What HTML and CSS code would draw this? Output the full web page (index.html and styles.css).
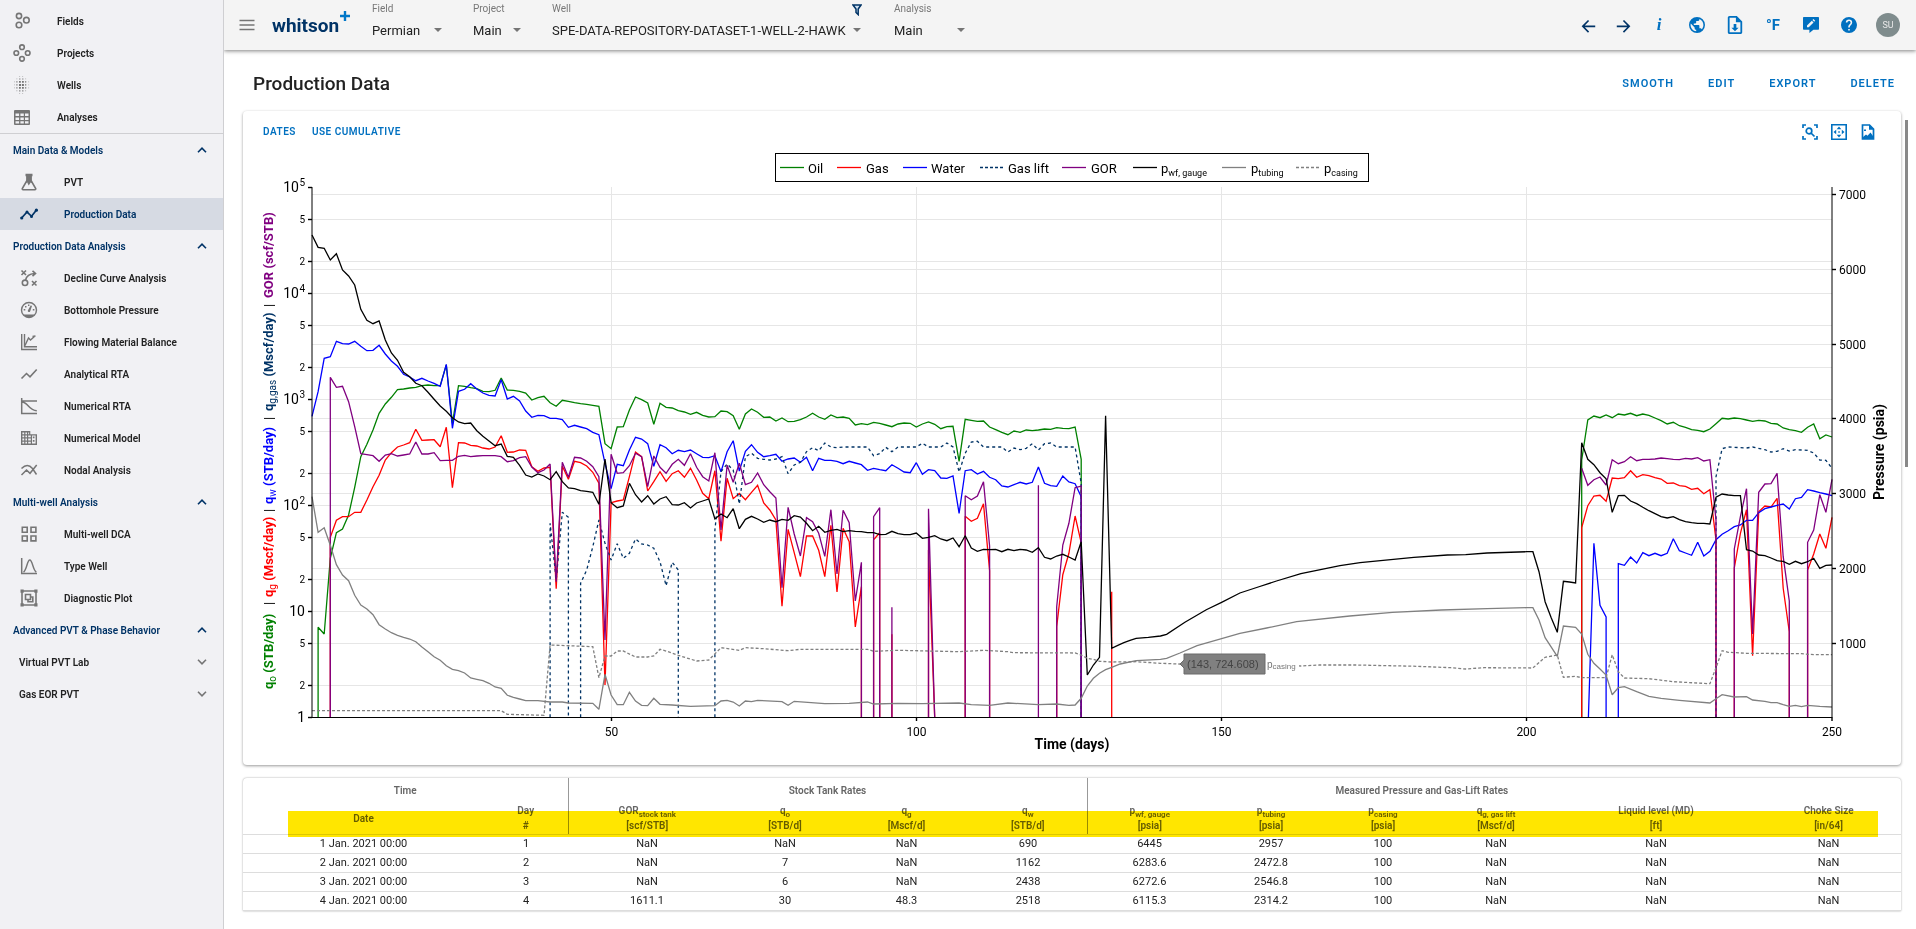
FILE: index.html
```html
<!DOCTYPE html>
<html lang="en">
<head>
<meta charset="utf-8">
<title>Production Data</title>
<link rel="stylesheet" href="styles.css">
</head>
<body>
<div class="app">
  <nav class="sidebar">
    <div class="nav-top">
      <a href="#" class="nav-item"><svg class="ico" viewBox="0 0 18 18"><g fill="none" stroke="currentColor" stroke-width="1.6"><circle cx="6" cy="4" r="2.6"/><circle cx="13.4" cy="8.2" r="2.8"/><circle cx="6" cy="13" r="2.8"/></g></svg><span>Fields</span></a>
      <a href="#" class="nav-item"><svg class="ico" viewBox="0 0 18 18"><g fill="none" stroke="currentColor" stroke-width="1.6"><circle cx="9" cy="3.2" r="2.3"/><circle cx="3.3" cy="9" r="2.3"/><circle cx="14.7" cy="9" r="2.3"/><circle cx="9" cy="14.8" r="2.3"/></g></svg><span>Projects</span></a>
      <a href="#" class="nav-item"><svg class="ico" viewBox="0 0 18 18" fill="currentColor"><path d="M6 7.9h2v2H6zM8.9 7.9h2v2h-2zM6 5h1.8v1.8H6zM9 5h1.8v1.8H9zM6 11h1.8v1.8H6zM9 11h1.8v1.8H9zM12 5.2h1.3v1.3H12zM12 8.2h1.3v1.3H12zM12 11.2h1.3v1.3H12zM3.3 5.2h1.2v1.3H3.3zM3.3 8.2h1.2v1.3H3.3zM3.3 11.2h1.2v1.3H3.3zM6.2 2.4h1.2v1.2H6.2zM9.2 2.4h1.2v1.2H9.2zM6.2 14.2h1.2v1.2H6.2zM9.2 14.2h1.2v1.2H9.2z"/><path opacity=".6" d="M3.4 2.4h.9v.9h-.9zM12.2 2.4h.9v.9h-.9zM15.2 5.4h.9v.9h-.9zM15.2 8.4h.9v.9h-.9zM15.2 11.4h.9v.9h-.9zM1 5.4h.9v.9H1zM1 8.4h.9v.9H1zM1 11.4h.9v.9H1zM3.4 14.3h.9v.9h-.9zM12.2 14.3h.9v.9h-.9zM6.2.3h.9v.7h-.9zM9.2.3h.9v.7h-.9zM6.2 17h.9v.7h-.9zM9.2 17h.9v.7h-.9z"/></svg><span>Wells</span></a>
      <a href="#" class="nav-item"><svg class="ico" viewBox="0 0 18 18"><path fill="currentColor" fill-rule="evenodd" d="M2 2h14q1 0 1 1v13q0 1-1 1H2q-1 0-1-1V3q0-1 1-1zM2.5 5.5v2.6h3.6V5.500zM7.400 5.500v2.600h3.400V5.500zM12 5.500v2.600h3.500V5.500zM2.500 9.400v2.500h3.600V9.400zM7.400 9.400v2.500h3.400V9.400zM12 9.400v2.500h3.500V9.400zM2.500 13.200v2.400h3.600v-2.400zM7.400 13.200v2.400h3.400v-2.400zM12 13.200v2.400h3.500v-2.400z"/></svg><span>Analyses</span></a>
    </div>
    <button type="button" class="nav-head"><span>Main Data &amp; Models</span><svg class="chev" viewBox="0 0 10 6"><path d="M1 5.200 5 1.200l4 4"/></svg></button>
    <a href="#" class="nav-item sub"><svg class="ico" viewBox="0 0 18 18"><path fill="none" stroke="currentColor" stroke-width="1.600" d="M7 2v5.500L2.300 15.500q-.3 1.200.8 1.200h11.800q1.100 0 .8-1.200L11 7.500V2"/><path fill="currentColor" d="M5.500.8h7v2.400h-7zM6.500 3h5v5l1.800 2.600-2.600-1-2 2.800-1.600-3.200-2 1L6.500 8z"/></svg><span>PVT</span></a>
    <a href="#" class="nav-item sub active"><svg class="ico" viewBox="0 0 18 18"><path fill="none" stroke="currentColor" stroke-width="1.700" d="M1.600 13 7 7l4.500 4.300L16.500 5"/><g fill="currentColor"><circle cx="1.700" cy="13" r="1.600"/><circle cx="7" cy="7" r="1.500"/><circle cx="11.500" cy="11.400" r="1.500"/><circle cx="16.400" cy="5.200" r="1.600"/></g></svg><span>Production Data</span></a>
    <button type="button" class="nav-head"><span>Production Data Analysis</span><svg class="chev" viewBox="0 0 10 6"><path d="M1 5.200 5 1.200l4 4"/></svg></button>
    <a href="#" class="nav-item sub"><svg class="ico" viewBox="0 0 18 18"><g fill="none" stroke="currentColor" stroke-width="1.600"><path d="M1.500 1.500 6 6M6 1.500 1.500 6M12 12l4.500 4.500M16.500 12 12 16.500"/><circle cx="5" cy="13.800" r="2.700"/><path d="M5.500 11C6.500 7 10 4.800 14.500 4.500M12.500 1.800l3 2.700-3 2.700"/></g></svg><span>Decline Curve Analysis</span></a>
    <a href="#" class="nav-item sub"><svg class="ico" viewBox="0 0 18 18"><circle cx="9" cy="9" r="7.500" fill="none" stroke="currentColor" stroke-width="1.400"/><path fill="currentColor" d="M3.800 13.500h10.400q-1.800 3.300-5.200 3.300t-5.200-3.300zM10.800 4.200 12 5l-1.800 5.200q-.4 1-1.500.9-1.200-.4-.9-1.500zM3.700 8h1.600v1.400H3.700zM5 5h1.500v1.400H5zM8 3.600h1.400V5H8zM12.800 8h1.600v1.400h-1.600z"/></svg><span>Bottomhole Pressure</span></a>
    <a href="#" class="nav-item sub"><svg class="ico" viewBox="0 0 18 18"><g fill="none" stroke="currentColor" stroke-width="1.400"><path d="M1.700 1v15.500H17M4.500 1v12.700H17"/><path d="M5 12.500 8.500 5l2 2 4.500-4M12.500 3.500 15.500 3"/></g></svg><span>Flowing Material Balance</span></a>
    <a href="#" class="nav-item sub"><svg class="ico" viewBox="0 0 18 18"><path fill="none" stroke="currentColor" stroke-width="1.600" d="m1.500 13.500 5-5 3.500 3.300L16.700 4.500"/></svg><span>Analytical RTA</span></a>
    <a href="#" class="nav-item sub"><svg class="ico" viewBox="0 0 18 18"><path fill="none" stroke="currentColor" stroke-width="1.500" d="M1.700 1v15.500H17M1.700 4H17M2 5c6 0 6.500 8.500 14.800 8.800"/></svg><span>Numerical RTA</span></a>
    <a href="#" class="nav-item sub"><svg class="ico" viewBox="0 0 18 18"><path fill="currentColor" fill-rule="evenodd" d="M1 2h9.300v3.200H17V16H1zM2.400 3.400v1.800h1.800V3.400zM5.400 3.400v1.800h1.600V3.400zM2.400 6.500v1.800h1.800V6.500zM5.400 6.500v1.800h1.600V6.500zM2.400 9.600v1.800h1.800V9.600zM5.400 9.600v1.800h1.600V9.600zM2.400 12.700v1.900h1.800v-1.900zM5.400 12.700v1.900h1.600v-1.900zM8.200 3.400v1.800h.9V3.400zM8.200 6.500v1.800h2.600V6.500zM8.200 9.600v1.800h2.600V9.600zM8.200 12.700v1.900h2.600v-1.900zM12 6.500v8.100h3.600V6.500zM12.800 7.600h1.700v1.700h-1.700zM12.800 11h1.700v1.700h-1.700z"/></svg><span>Numerical Model</span></a>
    <a href="#" class="nav-item sub"><svg class="ico" viewBox="0 0 18 18"><path fill="none" stroke="currentColor" stroke-width="1.500" d="m1.500 14 5-5 3.500 3.300L16.700 4M1.500 7.500q6-6 11 0l4 6"/></svg><span>Nodal Analysis</span></a>
    <button type="button" class="nav-head"><span>Multi-well Analysis</span><svg class="chev" viewBox="0 0 10 6"><path d="M1 5.200 5 1.200l4 4"/></svg></button>
    <a href="#" class="nav-item sub"><svg class="ico" viewBox="0 0 18 18"><path fill="none" stroke="currentColor" stroke-width="1.600" d="M2.300 2.300h4.900v4.900H2.300zM11 2.300h4.900v4.900H11zM2.300 11h4.900v4.900H2.300zM11 11h4.900v4.900H11z"/></svg><span>Multi-well DCA</span></a>
    <a href="#" class="nav-item sub"><svg class="ico" viewBox="0 0 18 18"><path fill="none" stroke="currentColor" stroke-width="1.500" d="M1.700 1v15.500H17M3.500 15C7 13 7 3 9.800 3s2.900 10 6.500 12"/></svg><span>Type Well</span></a>
    <a href="#" class="nav-item sub"><svg class="ico" viewBox="0 0 18 18"><g fill="none" stroke="currentColor" stroke-width="1.600"><path d="M2 2h14v14H2zM5.500 5.500h5v5h-5z"/><path d="M10.500 8h2.300v4.800H8v-2.300"/></g><path fill="currentColor" d="M.5.500h3.200v3.200H.5zM14.300.500h3.200v3.200h-3.200zM.5 14.300h3.200v3.200H.5zM14.300 14.300h3.200v3.200h-3.200z"/></svg><span>Diagnostic Plot</span></a>
    <button type="button" class="nav-head"><span>Advanced PVT &amp; Phase Behavior</span><svg class="chev" viewBox="0 0 10 6"><path d="M1 5.200 5 1.200l4 4"/></svg></button>
    <button type="button" class="nav-head plain"><span>Virtual PVT Lab</span><svg class="chev" viewBox="0 0 10 6"><path d="m1 .8 4 4 4-4"/></svg></button>
    <button type="button" class="nav-head plain"><span>Gas EOR PVT</span><svg class="chev" viewBox="0 0 10 6"><path d="m1 .8 4 4 4-4"/></svg></button>
  </nav>

  <div class="content">
    <header class="topbar">
      <button type="button" class="menu-btn" aria-label="Menu"><svg viewBox="0 0 16 12"><path d="M.5 1.500h15M.5 6h15M.5 10.500h15" stroke="currentColor" stroke-width="1.300"/></svg></button>
      <a href="#" class="logo">whitson<svg viewBox="0 0 10 10"><path d="M5 0v10M0 5h10" stroke="#0077c8" stroke-width="2.400"/></svg></a>
      <div class="picker field"><label for="field">Field</label><div class="select"><select id="field"><option>Permian</option></select></div></div>
      <div class="picker project"><label for="project">Project</label><div class="select"><select id="project"><option>Main</option></select></div></div>
      <div class="picker well"><label for="well">Well</label><svg class="filter" viewBox="0 0 10 12"><path d="M1 1h8L6.200 5v5.600L4 8.500V5z" fill="#cfe0f0" stroke="#003366" stroke-width="1.500"/></svg><div class="select"><select id="well"><option>SPE-DATA-REPOSITORY-DATASET-1-WELL-2-HAWK</option></select></div></div>
      <div class="picker analysis"><label for="analysis">Analysis</label><div class="select"><select id="analysis"><option>Main</option></select></div></div>
      <div class="actions">
        <button type="button" class="arrow" aria-label="Back"><svg viewBox="0 0 18 18"><path fill="none" stroke="currentColor" stroke-width="1.800" d="M16 10.500H2.500M8.500 4l-6.500 6.500 6.500 6.500"/></svg></button>
        <button type="button" class="arrow" aria-label="Forward"><svg viewBox="0 0 18 18"><path fill="none" stroke="currentColor" stroke-width="1.800" d="M2 10.500h13.500M9.500 4l6.500 6.500-6.500 6.500"/></svg></button>
        <button type="button" class="info">i</button>
        <button type="button" aria-label="Globe"><svg viewBox="2 2 20 20"><path fill="currentColor" d="M17.900 17.390C17.640 16.590 16.890 16 16 16H15V13A1 1 0 0 0 14 12H8V10H10A1 1 0 0 0 11 9V7H13A2 2 0 0 0 15 5V4.590C17.930 5.770 20 8.640 20 12C20 14.080 19.200 15.970 17.900 17.390M11 19.930C7.050 19.440 4 16.080 4 12C4 11.380 4.080 10.780 4.210 10.210L9 15V16A2 2 0 0 0 11 18M12 2A10 10 0 0 0 2 12A10 10 0 0 0 12 22A10 10 0 0 0 22 12A10 10 0 0 0 12 2Z"/></svg></button>
        <button type="button" aria-label="Download"><svg class="tall" viewBox="4 2 16 20"><path fill="currentColor" d="M14 2H6C4.890 2 4 2.900 4 4V20C4 21.100 4.890 22 6 22H18C19.100 22 20 21.100 20 20V8L14 2M18 20H6V4H13V9H18V20M12 19L8 15H10.500V11H13.500V15H16L12 19Z"/></svg></button>
        <button type="button" class="unit">°F</button>
        <button type="button" aria-label="Feedback"><svg viewBox="2 2 20 20"><path fill="currentColor" fill-rule="evenodd" d="M3 2h18q1 0 1 1v14q0 1-1 1h-6l-5 4v-4H3q-1 0-1-1V3q0-1 1-1zM7 14.800h2.200l6-6-2.200-2.200-6 6zM13.800 5.800l2.200 2.200 1.300-1.300-2.200-2.200z"/></svg></button>
        <button type="button" aria-label="Help"><svg viewBox="2 2 20 20"><path fill="currentColor" d="M15.070 11.250L14.170 12.170C13.450 12.890 13 13.500 13 15H11V14.500C11 13.390 11.450 12.390 12.170 11.670L13.410 10.410C13.780 10.050 14 9.550 14 9C14 7.890 13.100 7 12 7A2 2 0 0 0 10 9H8A4 4 0 0 1 12 5A4 4 0 0 1 16 9C16 9.880 15.640 10.670 15.070 11.250M13 19H11V17H13M12 2A10 10 0 0 0 2 12A10 10 0 0 0 12 22A10 10 0 0 0 22 12C22 6.470 17.500 2 12 2Z"/></svg></button>
        <button type="button" class="avatar">SU</button>
      </div>
    </header>

    <main>
      <div class="page-head">
        <h1>Production Data</h1>
        <div class="page-actions"><button type="button">Smooth</button><button type="button">Edit</button><button type="button">Export</button><button type="button">Delete</button></div>
      </div>

      <section class="card chart-card">
        <div class="chart-tools">
          <button type="button">Dates</button><button type="button">Use cumulative</button>
          <span class="chart-icons">
            <button type="button" aria-label="Zoom"><svg viewBox="0 0 16 16" fill="none" stroke="currentColor" stroke-width="1.700"><path d="M1 4V1h3M12 1h3v3M15 12v3h-3M4 15H1v-3M9 9l3.500 3.500"/><circle cx="7" cy="7" r="2.800"/></svg></button>
            <button type="button" aria-label="Fit"><svg viewBox="0 0 16 16"><path fill="none" stroke="currentColor" stroke-width="1.600" d="M.8.800h14.400v14.400H.8z"/><path fill="currentColor" d="M8 2.500l2.300 2.700H5.700zM8 13.500l2.300-2.700H5.700zM2.500 8l2.700-2.300v4.600zM13.500 8l-2.700-2.300v4.600zM7.300 7.300h1.500v1.500H7.300z"/></svg></button>
            <button type="button" aria-label="Save image"><svg viewBox="0 0 16 16"><path fill="none" stroke="currentColor" stroke-width="1.700" d="M2.500 1h7l4 4v10h-11z"/><path fill="currentColor" d="M9 1v4.800h5L9 .5zM3 13l3-2.500 1.500 1.300L10.500 8.500 13 12v3H3zM4 5.500h2V7H4z"/></svg></button>
          </span>
        </div>
        <svg class="chart" viewBox="243 149 1658 616" role="img" aria-label="Production rates and pressures over time">
          <g id="grid" class="grid"></g>
          <g id="series" class="series"></g>
          <path class="axis" d="M312 187V717.500M1832 187V717.500M312 717.500H1832"/>
          <g id="ticks" class="ticks"></g>
          <g class="axis-title rates" transform="translate(273 689) rotate(-90)">
            <text x="0" fill="green">q<tspan class="s" dy="3">o</tspan><tspan dy="-3"> (STB/day)</tspan></text>
            <text x="84" class="bar">|</text>
            <text x="92" fill="red">q<tspan class="s" dy="3">g</tspan><tspan dy="-3"> (Mscf/day)</tspan></text>
            <text x="177" class="bar">|</text>
            <text x="185" fill="blue">q<tspan class="s" dy="3">w</tspan><tspan dy="-3"> (STB/day)</tspan></text>
            <text x="269" class="bar">|</text>
            <text x="278" fill="#003366">q<tspan class="s" dy="3">g,gas</tspan><tspan dy="-3"> (Mscf/day)</tspan></text>
            <text x="382" class="bar">|</text>
            <text x="391" fill="purple">GOR (scf/STB)</text>
          </g>
          <text class="axis-title mid" x="1072" y="749">Time (days)</text>
          <text class="axis-title mid" transform="rotate(-90 1884 452)" x="1884" y="452">Pressure (psia)</text>
          <g class="legend">
            <rect x="775.500" y="153.500" width="593" height="28"/>
            <path stroke="green" d="M780 167.500h24"/><text x="808" y="173">Oil</text>
            <path stroke="red" d="M837 167.500h24"/><text x="866" y="173">Gas</text>
            <path stroke="blue" d="M903 167.500h24"/><text x="931" y="173">Water</text>
            <path stroke="#003366" stroke-dasharray="3 2" d="M980 167.500h24"/><text x="1008" y="173">Gas lift</text>
            <path stroke="purple" d="M1062 167.500h24"/><text x="1091" y="173">GOR</text>
            <path stroke="black" d="M1133 167.500h24"/><text x="1161" y="173">p<tspan class="s" dy="3">wf, gauge</tspan></text>
            <path stroke="gray" d="M1222 167.500h24"/><text x="1251" y="173">p<tspan class="s" dy="3">tubing</tspan></text>
            <path stroke="gray" stroke-dasharray="3 2" d="M1296 167.500h24"/><text x="1324" y="173">p<tspan class="s" dy="3">casing</tspan></text>
          </g>
          <g class="tip">
            <rect class="tip-name" x="1265" y="655" width="34" height="18"/>
            <path d="M1180 664l4-4v-6h81v20h-81v-6z"/>
            <text x="1187" y="668">(143, 724.608)</text>
            <text class="name" x="1267" y="668">p<tspan class="s" dy="1">casing</tspan></text>
          </g>
        </svg>
      </section>

      <section class="card table-card">
        <table>
          <colgroup><col class="c-date"><col class="c-day"><col class="c-gor"><col class="c-118"><col class="c-125"><col class="c-118"><col class="c-125"><col class="c-118"><col class="c-106"><col class="c-120"><col class="c-liq"><col class="c-choke"></colgroup>
          <thead>
            <tr class="groups"><th colspan="2" class="edge">Time</th><th colspan="4" class="edge">Stock Tank Rates</th><th colspan="5">Measured Pressure and Gas-Lift Rates</th><th></th></tr>
            <tr class="cols"><th class="date">Date</th><th class="edge">Day<br>#</th><th>GOR<sub>stock tank</sub><br>[scf/STB]</th><th>q<sub>o</sub><br>[STB/d]</th><th>q<sub>g</sub><br>[Mscf/d]</th><th class="edge">q<sub>w</sub><br>[STB/d]</th><th>p<sub>wf, gauge</sub><br>[psia]</th><th>p<sub>tubing</sub><br>[psia]</th><th>p<sub>casing</sub><br>[psia]</th><th>q<sub>g, gas lift</sub><br>[Mscf/d]</th><th>Liquid level (MD)<br>[ft]</th><th>Choke Size<br>[in/64]</th></tr>
          </thead>
          <tbody>
            <tr><td>1 Jan. 2021 00:00</td><td>1</td><td>NaN</td><td>NaN</td><td>NaN</td><td>690</td><td>6445</td><td>2957</td><td>100</td><td>NaN</td><td>NaN</td><td>NaN</td></tr>
            <tr><td>2 Jan. 2021 00:00</td><td>2</td><td>NaN</td><td>7</td><td>NaN</td><td>1162</td><td>6283.6</td><td>2472.8</td><td>100</td><td>NaN</td><td>NaN</td><td>NaN</td></tr>
            <tr><td>3 Jan. 2021 00:00</td><td>3</td><td>NaN</td><td>6</td><td>NaN</td><td>2438</td><td>6272.6</td><td>2546.8</td><td>100</td><td>NaN</td><td>NaN</td><td>NaN</td></tr>
            <tr><td>4 Jan. 2021 00:00</td><td>4</td><td>1611.1</td><td>30</td><td>48.3</td><td>2518</td><td>6115.3</td><td>2314.2</td><td>100</td><td>NaN</td><td>NaN</td><td>NaN</td></tr>
          </tbody>
        </table>
        <div class="marker"></div>
      </section>
    </main>
    <div class="scroll-thumb"></div>
  </div>
</div>
<script src="chart.js"></script>
</body>
</html>
```
FILE: styles.css
```css
* { box-sizing: border-box; }
body { margin: 0; font-family: Roboto, "Liberation Sans", sans-serif; color: #222; background: #fff; }
button { font: inherit; color: inherit; background: none; border: 0; padding: 0; cursor: pointer; }
a { color: inherit; text-decoration: none; }
.app { display: flex; min-height: 100vh; }

.sidebar { flex: 0 0 224px; position: relative; z-index: 1; background: #f1f1f4; border-right: 1px solid #cfcfd2; padding-top: 5px; font-size: 10px; font-weight: 600; }
.nav-top { border-bottom: 1px solid #cfcfd2; height: 129px; }
.nav-item { display: flex; align-items: center; height: 32px; padding-left: 13px; }
.nav-item .ico { width: 18px; height: 18px; color: #757575; margin-right: 26px; }
.nav-item.sub { padding-left: 20px; }
.nav-item.active { background: #d6dae3; color: #003366; }
.nav-item.active .ico { color: #003366; }
.nav-head { display: flex; align-items: center; justify-content: space-between; width: 100%; height: 32px; padding: 0 16px 0 13px; color: #003366; text-align: left; }
.nav-head.plain { padding-left: 19px; color: #222; }
.chev { width: 10px; height: 6px; fill: none; stroke: #003366; stroke-width: 1.600; }
.plain .chev { stroke: #757575; }

.content { flex: 1; min-width: 0; position: relative; }
.topbar { display: flex; height: 50px; padding: 0 16px 0 15px; background: #f4f4f4; box-shadow: 0 1px 4px rgba(0,0,0,.5); position: relative; }
.menu-btn { width: 16px; align-self: center; color: #757575; }
.menu-btn svg { display: block; width: 16px; height: 12px; }
.logo { display: flex; align-items: center; margin-left: 17px; width: 100px; color: #003366; font-size: 19px; font-weight: 700; }
.logo svg { width: 10px; height: 10px; margin: 0 0 18px 1px; }
.picker { padding-top: 2px; position: relative; }
.picker label { display: block; font-size: 10px; line-height: 13px; color: #777; }
.select { position: relative; margin-top: 7px; }
.select::after { content: ""; position: absolute; right: 0; top: 6px; border: 4px solid transparent; border-top-color: #757575; pointer-events: none; }
select { appearance: none; display: block; width: 100%; height: 17px; padding: 0; border: 0; background: none; font: 13px/17px Roboto, "Liberation Sans", sans-serif; color: #222; }
.field { width: 70px; margin-right: 31px; }
.project { width: 48px; margin-right: 31px; }
.well { width: 309px; margin-right: 33px; }
.analysis { width: 71px; }
.filter { position: absolute; right: -1px; top: 4px; width: 10px; height: 12px; }
.actions { display: flex; align-items: center; margin-left: auto; color: #0070c0; }
.actions button { display: flex; justify-content: center; align-items: center; width: 38px; height: 24px; }
.actions svg { width: 16px; height: 16px; }
.actions svg.tall { height: 18px; }
.actions .arrow { width: 34px; color: #003366; }
.actions .info { font: italic bold 17px "Liberation Serif", serif; }
.actions .unit { font-size: 15px; font-weight: 700; }
.actions .avatar { width: 24px; margin-left: 8px; border-radius: 50%; background: #7f8c8d; color: #e8e8e8; font-size: 9px; }

main { padding: 0 15px 0 19px; }
.page-head { display: flex; align-items: center; justify-content: space-between; height: 61px; padding: 6px 6px 0 10px; }
h1 { margin: 0; font-size: 19px; font-weight: 500; }
.page-actions { display: flex; gap: 34px; }
.page-actions button, .chart-tools > button { color: #0070c0; font-size: 11px; font-weight: 600; letter-spacing: 1px; text-transform: uppercase; }
.card { position: relative; background: #fff; border-radius: 4px; box-shadow: 0 1px 3px rgba(0,0,0,.4); }
.chart-tools { display: flex; align-items: center; gap: 16px; height: 38px; padding: 3px 25px 0 20px; }
.chart-tools > button { font-size: 10px; letter-spacing: .05em; }
.chart-icons { display: flex; gap: 13px; margin-left: auto; color: #0070c0; }
.chart-icons svg { display: block; width: 16px; height: 16px; }
.chart { display: block; width: 100%; height: auto; }

.grid { stroke: #e6e6e6; stroke-width: 1; }
.series { fill: none; stroke-width: 1.300; stroke-linejoin: miter; stroke-miterlimit: 2; }
.axis { fill: none; stroke: #000; stroke-width: 1; }
.ticks { font-size: 12px; stroke-width: 1.400; }
.ticks text { fill: #000; }
.ticks .major { font-size: 14px; text-anchor: end; }
.ticks .minor, .ticks .sup { font-size: 10px; text-anchor: end; }
.ticks .mid { text-anchor: middle; }
.axis-title { font-size: 14px; font-weight: 700; }
.axis-title.rates { font-size: 13px; }
.axis-title.mid { text-anchor: middle; }
.axis-title .s { font-size: 10px; font-weight: 400; }
.axis-title .bar { font-weight: 400; }
.legend { font-size: 13px; }
.legend rect { fill: #fff; stroke: #000; }
.legend path { stroke-width: 1.300; }
.legend .s { font-size: 9px; }
.tip path { fill: #808080; stroke: #6a6a6a; }
.tip text { font: 11px "Liberation Sans", sans-serif; fill: #444; }
.tip .tip-name { fill: #fff; }
.tip .name { font-size: 10px; fill: #777; }
.tip .s { font-size: 8px; }

.table-card { margin-top: 13px; height: 133px; overflow: hidden; border-radius: 4px 4px 0 0; box-shadow: 0 0 2px rgba(0,0,0,.4); }
table { width: 100%; table-layout: fixed; border-collapse: collapse; text-align: center; }
.c-date { width: 241px; } .c-day { width: 84px; } .c-gor { width: 158px; } .c-118 { width: 118px; } .c-125 { width: 125px; }
.c-106 { width: 106px; } .c-120 { width: 120px; } .c-liq { width: 200px; } .c-choke { width: 145px; }
th { padding: 0; font-size: 10px; line-height: 15px; font-weight: 600; color: #666; }
th.edge { border-right: 1px solid #999; }
th sub { font-size: 8px; line-height: 0; vertical-align: -3px; }
.groups th { height: 25px; }
.cols th { height: 31px; vertical-align: top; border-bottom: 1px solid #ddd; }
.cols .date { vertical-align: middle; }
td { height: 19px; padding: 0; font-size: 11px; line-height: 18px; border-bottom: 1px solid #ddd; }
.marker { position: absolute; left: 45px; right: 23px; top: 33px; height: 26px; background: #ffe600; mix-blend-mode: multiply; }
.scroll-thumb { position: absolute; right: 8px; top: 120px; width: 3px; height: 347px; background: #888; }
```
FILE: chart.js
```js
// Each series is a list of heights for consecutive days. "d:y" jumps to day d
// on the same line; "|" lifts the pen. Heights are thirds of a pixel; B is the axis line.
const B = 1102;
const series = [
  ['green', '2:B 2:832 852 625 548 537 495 412 320 283 240 190 162 142 119 117 114 112 107 105 107 107 45 220 107 109 113 116 124 125 121 84 120 121 124 129 150 143 139 158 169 151 154 158 161 163 166 169 281 296 231 230 180 141 149 159 223 160 172 174 182 186 193 187 196 201 200 183 185 197 238 192 177 187 202 201 213 204 215 214 209 201 190 201 208 195 203 201 205 225 221 224 217 220 225 230 222 219 220 231 222 216 223 236 230 229 334 208 211 214 213 231 239 247 254 243 247 240 242 240 237 238 233 235 236 231 328 127:B | 209:B 209:330 210 198 203 195 203 192 195 190 197 192 196 204 212 222 217 227 232 239 241 245 237 221 205 207 204 206 210 214 211 213 220 222 234 239 242 247 232 222 266 255 261'],
  ['red', '4:B 4:562 511 500 500 487 487 450 410 376 330 308 291 285 278 238 271 270 269 290 232 413 278 279 286 288 294 297 291 257 307 306 300 301 350 364 354 352 716 348 388 334 338 348 367 400 1005 458 453 450 380 306 320 423 395 365 394 371 362 382 355 390 430 446 362 574 385 446 430 449 427 406 459 480 510 769 538 608 680 558 558 601 680 526 726 535 575 831 710 91:B | 93:B 93:569 548 94:B | 96:B 96:853 96:B | 102:B 102:600 B | 108:B 108:499 514 505 461 662 112:B | 123:B 123:830 674 610 498 578 127:B | 132:B 132:725 132:B | 209:B 209:533 467 438 436 454 384 386 383 362 382 374 377 383 387 400 399 407 409 418 415 431 419 570 231:B | 234:B 234:654 550 479 917 485 468 471 445 715 845 243:B | 246:B 246:660 612 552 595 502'],
  ['blue', '1:199 125 25 20 -26 -19 -18 -26 -11 2 1 -14 12 33 49 73 81 92 85 93 100 109 43 235 124 118 101 117 129 136 138 89 147 139 153 183 202 196 197 205 205 209 232 226 231 236 247 254 340 416 343 347 300 262 267 281 349 284 293 311 301 305 300 311 322 323 317 365 305 272 363 304 284 307 320 317 313 334 327 324 337 322 362 325 331 331 334 341 334 339 344 361 355 359 362 344 355 366 368 338 373 359 362 384 385 378 490 362 359 372 364 382 389 408 411 404 397 402 397 351 400 407 409 378 396 401 440 127:B | 210.100:B 211:580 766 801 213:B | 215:B 215:641 646 621 639 608 617 610 617 610 566 602 609 616 577 618 604 569 553 542 530 525 511 511 488 476 471 466 462 477 446 442 419 423 428 432 437'],
  ['#003366', '40:B 40:520 690 487 502 43:B | 45:B 45:700 660 590 510 580 630 581 625 610 567 582 585 595 635 707 637 660 61:B | 67:B 67:540 365 342 360 462 320 310 325 328 330 327 320 371 345 337 305 293 302 279 291 293 291 92:291 317 311 292 305 291 100:291 280 291 104:291 279 291 366 310 276 274 291 114:291 306 294 299 295 281 300 281 279 291 126:291 400 127:B | 231:B 231:380 296 291 236:294 291 239:299 306 304 296 303 299 246:301 309 330 331 355', '3 3'],
  ['purple', '4:B 4:82 112 109 155 230 311 314 317 334 315 311 318 315 312 276 312 312 308 332 331 331 319 316 320 318 317 317 317 320 335 332 323 320 351 368 360 342 695 337 382 322 324 334 350 380 870 313 370 368 347 310 320 410 318 352 370 343 328 346 311 352 380 393 308 540 346 397 340 404 397 369 404 425 444 713 472 552 618 503 515 550 619 479 672 481 518 753 637 91:B | 93:B 93:500 473 94:B | 96:B 96:772 96:B | 102:B 102:476 B | 108:B 108:437 449 438 395 588 112:B | 120:B 120:406 120:B | 123:B 123:770 585 520 413 408 127:B | 209:355 406 389 381 405 329 341 335 320 332 328 328 327 324 326 328 329 325 327 323 333 329 510 231:B | 234:B 234:597 500 416 852 427 402 401 370 620 753 243:B | 246:B 246:577 540 434 487 388'],
  ['black', '1:-345 -308 -305 -270 -289 -240 -222 -195 -122 -89 -79 -87 -30 9 31 67 80 100 107 127 148 168 184 203 216 221 219 242 259 273 287 282 319 322 346 375 381 372 378 389 365 395 414 416 422 424 427 463 327 458 473 468 400 434 456 437 462 447 440 464 465 458 474 459 453 447 507 492 503 476 536 508 499 507 517 510 515 508 511 497 501 520 542 529 547 541 538 545 542 544 545 548 548 554 553 544 551 554 554 549 565 562 557 567 572 564 590 557 594 604 598 599 598 605 598 602 598 600 607 593 622 627 618 613 621 630 575 975 945 922 197 895 886 878 871 865 138:862 140:858 853 144:817 147.500:779 150:757 153:729 156:711 159:693 163:671 169.400:647 172.700:638 181.500:622 187:615 190:614 193.500:609 200:605 605 665 755 803 847 694 696 699 278 328 344 368 386 487 437 436 453 461 472 482 491 500 504 500 509 515 518 520 520 522 442 432 435 437 437 599 603 615 617 624 632 634 643 634 641 635 625 655 646 645'],
  ['gray', '1:440 547 533 586 644 675 692 736 765 777 794 824 837 848 856 862 867 875 891 905 920 931 947 958 962 969 984 988 992 1000 1011 1015 1036 1042 1047 1052 38:1052 40:1056 42:1056 1059 47:1060 1078 973 1035 1064 1064 1027 1053 1066 1067 1045 1063 60:1065 63:1069 67:1067 1053 1051 1056 1068 1053 1055 1051 78:1055 1066 1054 85:1061 89:1060 92:1056 1062 97:1060 101:1061 107:1059 109:1064 112:1066 115:1059 120:1064 123:1062 125:1066 1065 1045 1008 985 970 959 952 133.400:942 136:932 140:928 925 143.200:909 146:887 150:866 153:850 157.400:834 162.300:815 171:798 178:787 186:780 193.500:776 200:773 773 810 863 205:919 828 208:832 852 913 940 957 975 1034 1013 1010 218:1025 220:1039 222:1045 225:1051 230:1059 1046 1034 234:1041 236:1040 1050 239:1054 1058 1058 1064 1069 1066 1070 1066 248:1069 250:1071'],
  ['gray', '1:1082 32:1082 1093 39:1096 885 47:890 983 918 918 903 903 54:921 56:921 918 898 903 61:916 64:933 66:930 68:893 71:901 893 75:896 79:902 81:898 92:898 904 97:901 107:905 111:901 115:905 908 126:909 915 925 928 934 132:936 136:935 140:940 143:942 163:948 166:945 172:945 182:949 187.500:953 190:957 193:953 201:954 203:922 205:915 982 208:979 983 213:983 914 965 984 220:986 224:995 230:1001 953 902 907 236:910 245:911 247:914 250:914', '3 2']
];

const NS = 'http://www.w3.org/2000/svg';
const X0 = 312, X1 = 1832, Y0 = 717.500, DECADE = 106, KPSI = 74.800;
const dayX = d => X0 + (d - 1) * (X1 - X0) / 249;

function add(parent, tag, attrs, text) {
  const el = document.createElementNS(NS, tag);
  for (const k in attrs) el.setAttribute(k, attrs[k]);
  if (text !== undefined) el.textContent = text;
  document.getElementById(parent).appendChild(el);
}
const hLine = y => add('grid', 'path', { d: `M${X0} ${Math.floor(y) + 0.5}H${X1}` });
const tick = d => add('ticks', 'path', { d, stroke: '#000' });

for (let n = 0; n <= 5; n++) {
  for (const m of n < 5 ? [1, 2, 5] : [1]) {
    const y = Y0 - DECADE * (n + Math.log10(m));
    const ty = Math.floor(y) + 0.5;
    if (n + m > 1 && n < 5) hLine(y);
    tick(`M308 ${ty}H312`);
    if (m > 1) add('ticks', 'text', { x: 305, y: ty + 3, class: 'minor' }, m);
    else if (n < 2) add('ticks', 'text', { x: 305, y: ty + 4, class: 'major' }, n ? 10 : 1);
    else {
      add('ticks', 'text', { x: 299, y: ty + 4, class: 'major' }, 10);
      add('ticks', 'text', { x: 305, y: ty - 2, class: 'sup' }, n);
    }
  }
}
for (let p = 1; p <= 7; p++) {
  const y = Y0 + 0.600 - KPSI * p;
  hLine(y);
  tick(`M1832 ${Math.floor(y) + 0.5}H1836`);
  add('ticks', 'text', { x: 1839, y: Math.floor(y) + 5 }, p * 1000);
}
for (let d = 50; d <= 250; d += 50) {
  const x = Math.floor(dayX(d)) + (d < 250 ? 0.5 : 0);
  if (d < 250) add('grid', 'path', { d: `M${x} 187V717` });
  tick(`M${x} 717V721`);
  add('ticks', 'text', { x, y: 736, class: 'mid' }, d);
}
for (const [stroke, data, dash] of series) {
  let day = 0, cmd = 'M', path = '';
  for (const t of data.split(' ')) {
    if (t === '|') { cmd = 'M'; continue; }
    const [a, b] = t.split(':');
    day = b === undefined ? day + 1 : +a;
    const v = b === undefined ? a : b;
    path += `${cmd}${dayX(day).toFixed(1)} ${((v === 'B' ? B : +v) / 3 + 350).toFixed(1)}`;
    cmd = 'L';
  }
  add('series', 'path', dash ? { d: path, stroke, 'stroke-dasharray': dash } : { d: path, stroke });
}
```
